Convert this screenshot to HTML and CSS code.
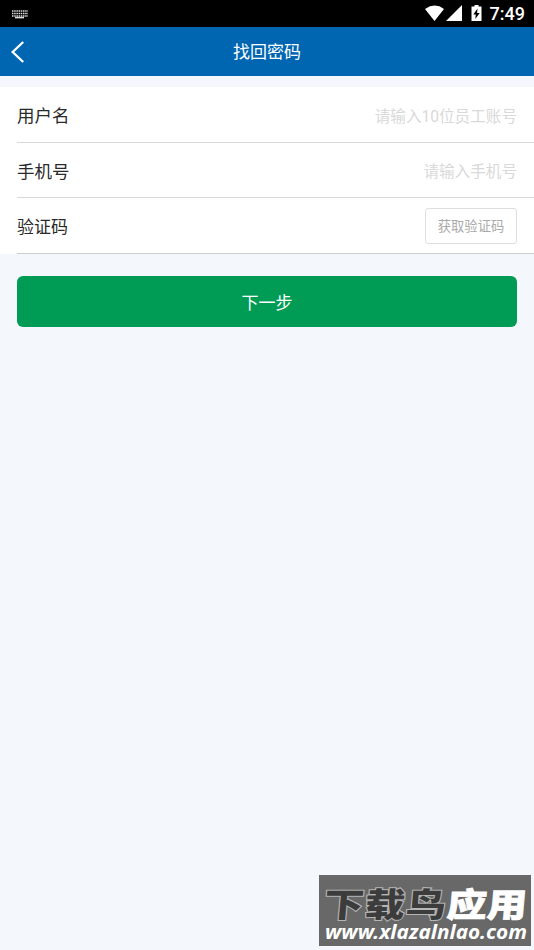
FILE: index.html
```html
<!DOCTYPE html>
<html lang="zh-CN">
<head>
<meta charset="utf-8">
<meta name="viewport" content="width=device-width, initial-scale=1">
<title>找回密码</title>
<link rel="stylesheet" href="styles.css">
</head>
<body>
<div class="status">
  <svg class="keyboard" width="16" height="9" viewBox="0 0 16 9">
    <path d="M0 1h16M0 3.500h16M0 6h16" stroke="#ddd" stroke-width="1.500" stroke-dasharray="1.500 .700" fill="none"/>
    <path d="M3 7.600h9" stroke="#ddd" stroke-width="1.500"/>
  </svg>
  <div class="status-right">
    <svg class="signals" width="58" height="17" viewBox="0 0 58 17" fill="#fff">
      <path d="M0 4Q10 -2.800 19 4L9.500 16z"/>
      <path d="M37 0V16H21z"/>
      <path d="M46.500 1.500h3V0h4v1.500h3V16h-10z"/>
      <path d="M52.500 3.500L48.300 9.500h2.500L50.300 14l4.400-6h-2.600z" fill="#000"/>
    </svg>
    <span class="clock">7:49</span>
  </div>
</div>
<header class="bar">
  <svg class="back" width="14" height="22" viewBox="0 0 14 22"><path d="M12.200 1L1.700 11l10.500 10" fill="none" stroke="#fff" stroke-width="2.300"/></svg>
  <h1 class="title">找回密码</h1>
</header>
<main>
  <section class="form">
    <label class="row"><span class="label">用户名</span><input class="field" placeholder="请输入10位员工账号"></label>
    <label class="row"><span class="label">手机号</span><input class="field" placeholder="请输入手机号"></label>
    <div class="row"><span class="label label-code">验证码</span><button class="code">获取验证码</button></div>
  </section>
  <button class="next">下一步</button>
</main>
<div class="mark">
  <svg width="212" height="71" viewBox="0 0 212 71">
    <g class="mark-name" transform="translate(0 41.500) skewX(-5) scale(1 .84)">
      <text class="dark" x="4" y="0" textLength="122">下载鸟</text>
      <text class="light" x="127" y="0" textLength="80">应用</text>
    </g>
    <text class="url" x="6" y="64" textLength="202" lengthAdjust="spacingAndGlyphs">www.xlazalnlao.com</text>
  </svg>
</div>
</body>
</html>
```
FILE: styles.css
```css
* { box-sizing: border-box; }
body {
  margin: 0;
  min-height: 950px;
  background: #f4f8fc;
  font-family: Roboto, "Noto Sans CJK SC", sans-serif;
  color: #2a2a2a;
}
.status {
  height: 27px;
  padding: 0 9px 0 12px;
  background: #000;
  display: flex;
  align-items: center;
  justify-content: space-between;
}
.keyboard { margin-top: 1px; }
.status-right { display: flex; align-items: center; gap: 7px; }
.signals { display: block; margin-top: -1px; }
.clock { color: #fff; font-size: 18px; line-height: 27px; font-weight: 500; }
.bar {
  height: 49px;
  background: #0066b1;
  padding: 0 11px;
  display: grid;
  grid-template-columns: 14px 1fr 14px;
  align-items: center;
}
.title {
  margin: 0;
  padding-top: 1px;
  color: #fff;
  font-size: 17px;
  font-weight: 400;
  line-height: 24px;
  text-align: center;
}
.form { margin-top: 11px; background: #fff; padding-left: 17px; }
.row {
  height: 55.6px;
  padding: 2px 17px 0 0;
  border-bottom: 1px solid #d9d9d9;
  display: flex;
  align-items: center;
  justify-content: space-between;
}
.row:last-child { border-bottom-color: #cbcdcf; }
.label { padding-top: 2px; font-size: 17.5px; line-height: 26px; }
.label-code { font-size: 17px; }
.field {
  width: 260px;
  padding: 3px 0 0;
  border: 0;
  outline: 0;
  background: none;
  font: 15.6px/24px Roboto, "Noto Sans CJK SC", sans-serif;
  text-align: right;
}
.field::placeholder { color: #d9d9d9; opacity: 1; }
.code {
  width: 92px;
  height: 36px;
  padding: 2px 0 0;
  border: 1px solid #dfdfdf;
  border-radius: 3px;
  background: #fff;
  color: #aaa;
  font: 13.3px/20px Roboto, "Noto Sans CJK SC", sans-serif;
}
.next {
  display: block;
  width: calc(100% - 34px);
  height: 51px;
  margin: 22px 17px 0;
  padding: 3px 0 0;
  border: 0;
  border-radius: 6px;
  background: #009b54;
  color: #fff;
  font: 17px/24px Roboto, "Noto Sans CJK SC", sans-serif;
}
.mark {
  position: absolute;
  right: 3px;
  bottom: 4px;
  width: 212px;
  height: 71px;
  background: #686868;
}
.mark svg { display: block; }
.mark-name { font: 900 40px "Noto Sans CJK SC", sans-serif; }
.dark { fill: #3c3c3c; stroke: #b5b5b5; stroke-width: 2.4px; paint-order: stroke; }
.light { fill: #fff; stroke: #fff; stroke-width: .8px; }
.url { font: italic 700 20px "Noto Sans", "Open Sans", sans-serif; fill: #fff; }
```
